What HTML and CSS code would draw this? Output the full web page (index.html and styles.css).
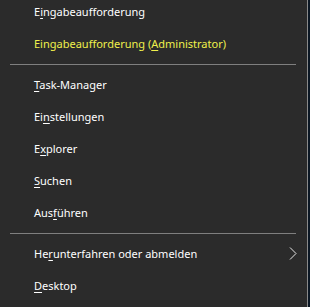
FILE: index.html
```html
<!DOCTYPE html>
<html lang="de">
<head>
    <meta charset="UTF-8">
    <title>Win+X</title>
    <link rel="stylesheet" href="styles.css">
</head>
<body>
    <div class="desk">
        <div class="menu">
            <div class="item"><span>E<u>i</u>ngabeaufforderung</span></div>
            <div class="item item_admin"><span>Eingabeaufforderung (<u>A</u>dministrator)</span></div>
            <div class="sep"></div>
            <div class="item"><span><u>T</u>ask-Manager</span></div>
            <div class="item"><span>Ei<u>n</u>stellungen</span></div>
            <div class="item"><span>E<u>x</u>plorer</span></div>
            <div class="item"><span><u>S</u>uchen</span></div>
            <div class="item"><span>Aus<u>f</u>ühren</span></div>
            <div class="sep"></div>
            <div class="item">
                <span>He<u>r</u>unterfahren oder abmelden</span>
                <svg class="chev" width="8" height="13" viewBox="0 0 8 13">
                    <path d="M1 0.5 L7 6.5 L1 12.5" fill="none" stroke="#e6e6e6" stroke-width="1"/>
                </svg>
            </div>
            <div class="item"><span><u>D</u>esktop</span></div>
        </div>
    </div>
</body>
</html>
```

FILE: styles.css
```css
* {
    margin: 0;
    padding: 0;
    box-sizing: border-box;
}

html, body {
    height: 100%;
    overflow: hidden;
}

body {
    background-color: #0b1724;
    font-family: 'Noto Sans', sans-serif;
    font-size: 11px;
    color: #ffffff;
}

.desk {
    display: flex;
    height: 100%;
}

.menu {
    width: 308px;
    height: calc(100% + 5px);
    margin-top: -5px;
    background-color: #2b2b2b;
    border-right: 1px solid #8a8a8a;
    padding-right: 1px;
}

.item {
    height: 32px;
    display: flex;
    align-items: center;
    justify-content: space-between;
    padding-left: 34px;
    padding-right: 9px;
    white-space: nowrap;
}

.item_admin {
    color: #f0f04c;
}

.item u {
    text-underline-offset: 2px;
}

.chev {
    display: block;
}

.sep {
    height: 1px;
    margin: 5px 10px 3px 10px;
    background-color: #7f7f7f;
}
```
